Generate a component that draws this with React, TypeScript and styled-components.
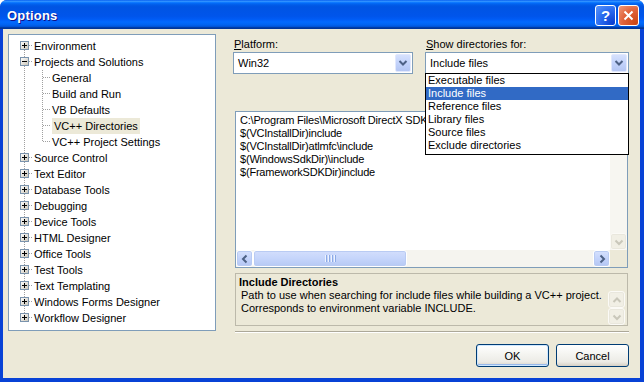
import React from 'react'
import styled, { createGlobalStyle, css } from 'styled-components'

const GlobalStyle = createGlobalStyle`
    html, body {
        margin: 0;
        padding: 0;
        background: #ffffff;
    }
    body {
        font-family: 'Liberation Sans', Arial, sans-serif;
        font-size: 11px;
        color: #000000;
    }
`

const Window = styled.div`
    width: 644px;
    height: 382px;
    display: flex;
    flex-direction: column;
    border-radius: 7px 7px 0 0;
    overflow: hidden;
    background: #0842d6;
`

const TitleBar = styled.div`
    height: 29px;
    flex: none;
    display: flex;
    align-items: center;
    padding: 0 5px 0 7px;
    background: linear-gradient(
        180deg,
        #0058ee 0%,
        #3593ff 4%,
        #288eff 6%,
        #127dff 8%,
        #036ffc 10%,
        #0262ee 14%,
        #0057e5 20%,
        #0054e3 24%,
        #0055eb 56%,
        #005bf5 66%,
        #026afe 76%,
        #0062ef 86%,
        #0052d6 92%,
        #0040ab 94%,
        #003092 100%
    );
`

const TitleText = styled.span`
    flex: 1;
    color: #ffffff;
    font-family: 'Liberation Sans', Arial, sans-serif;
    font-weight: bold;
    font-size: 13px;
    letter-spacing: 0.2px;
    padding-top: 2px;
    text-shadow: 1px 1px #0f1089;
`

const TitleButtons = styled.div`
    display: flex;
    gap: 2px;
    padding-top: 2px;
`

const CaptionButton = styled.div<{ $close?: boolean }>`
    width: 21px;
    height: 21px;
    box-sizing: border-box;
    border: 1px solid #ffffff;
    border-radius: 3px;
    display: flex;
    align-items: center;
    justify-content: center;
    color: #ffffff;
    font-family: 'Liberation Sans', Arial, sans-serif;
    font-weight: bold;
    font-size: 15px;
    background: radial-gradient(circle at 90% 90%, #0a3ed0 0%, #2a6cf0 55%, #5b95fa 100%);
    ${(p) =>
        p.$close &&
        css`
            background: radial-gradient(circle at 90% 90%, #cc4614 0%, #e0623a 55%, #f09a7a 100%);
        `}
`

const Frame = styled.div`
    flex: 1;
    display: flex;
    background: #ece9d8;
    border: solid #0842d6;
    border-width: 0 4px 4px 3px;
    padding: 5px 11px 0 5px;
`

const TreePanel = styled.div`
    width: 208px;
    height: 297px;
    box-sizing: border-box;
    border: 1px solid #7f9db9;
    background: #ffffff;
    padding: 3px 0 0 6px;
    overflow: hidden;
`

const TreeRowStyled = styled.div`
    display: flex;
    align-items: center;
    height: 16px;
`

const TreeCell = styled.span`
    width: 18px;
    height: 16px;
    flex: none;
    display: block;
`

const TreeLabel = styled.span<{ $selected?: boolean }>`
    height: 16px;
    line-height: 16px;
    padding: 0 2px 0 1px;
    white-space: nowrap;
    ${(p) =>
        p.$selected &&
        css`
            background: #ece9d8;
            padding: 0 2px;
            margin-left: 1px;
        `}
`

const RightPane = styled.div`
    margin-left: 17px;
    width: 396px;
    display: flex;
    flex-direction: column;
`

const ComboRow = styled.div`
    display: flex;
    gap: 12px;
`

const ComboGroup = styled.div<{ $width: number }>`
    width: ${(p) => p.$width}px;
    display: flex;
    flex-direction: column;
    position: relative;
`

const FieldLabel = styled.div`
    line-height: 16px;
    margin-top: 2px;
    padding-left: 1px;
`

const ComboBox = styled.div`
    height: 22px;
    box-sizing: border-box;
    border: 1px solid #7f9db9;
    background: #ffffff;
    display: flex;
    align-items: center;
    padding: 0 1px 0 4px;
`

const ComboText = styled.span`
    flex: 1;
`

const DropButton = styled.div`
    width: 16px;
    height: 18px;
    box-sizing: border-box;
    border: 1px solid #e1e8fd;
    border-radius: 2px;
    background: linear-gradient(180deg, #d6e1fd 0%, #c3d3fb 50%, #b4c6f3 100%);
    display: flex;
    align-items: center;
    justify-content: center;
`

const DropList = styled.div`
    position: absolute;
    left: 0;
    top: 39px;
    width: 204px;
    box-sizing: border-box;
    border: 1px solid #000000;
    background: #ffffff;
    padding-bottom: 2px;
    z-index: 2;
`

const DropItem = styled.div<{ $selected?: boolean }>`
    height: 13px;
    line-height: 13px;
    padding-left: 2px;
    white-space: nowrap;
    ${(p) =>
        p.$selected &&
        css`
            background: #316ac5;
            color: #ffffff;
        `}
`

const ListBox = styled.div`
    margin: 37px 0 0 2px;
    width: 393px;
    height: 157px;
    box-sizing: border-box;
    border: 1px solid #7f9db9;
    background: #ffffff;
    display: grid;
    grid-template-columns: 1fr 17px;
    grid-template-rows: 1fr 17px;
`

const ListContent = styled.div`
    padding: 2px 0 0 4px;
    overflow: hidden;
    white-space: nowrap;
`

const ListLine = styled.div`
    height: 13px;
    line-height: 13px;
    letter-spacing: -0.2px;
`

const VScroll = styled.div`
    display: flex;
    flex-direction: column;
    justify-content: space-between;
    background: #f7f6f1;
`

const HScroll = styled.div`
    display: flex;
    background: #f5f4ef;
`

const ScrollTrack = styled.div`
    flex: 1;
    display: flex;
`

const Thumb = styled.div<{ $size: number }>`
    width: ${(p) => p.$size}px;
    box-sizing: border-box;
    border: 1px solid #ffffff;
    border-radius: 3px;
    background: linear-gradient(180deg, #d3defc 0%, #c5d5fb 50%, #b6c9f4 100%);
    box-shadow: inset 0 0 0 1px #b9cbf3;
    display: flex;
    align-items: center;
    justify-content: center;
    gap: 1px;
`

const Grip = styled.span`
    width: 1px;
    height: 7px;
    background: #eef3fe;
    border-right: 1px solid #8caae6;
`

const ArrowButton = styled.div<{ $disabled?: boolean }>`
    width: 17px;
    height: 17px;
    flex: none;
    box-sizing: border-box;
    border: 1px solid #ffffff;
    border-radius: 3px;
    background: linear-gradient(180deg, #d6e1fd 0%, #c3d3fb 50%, #b4c6f3 100%);
    box-shadow: inset 0 0 0 1px #b9cbf3;
    display: flex;
    align-items: center;
    justify-content: center;
    ${(p) =>
        p.$disabled &&
        css`
            border-color: #fbfaf6;
            background: #f1efe5;
            box-shadow: inset 0 0 0 1px #e9e7dd;
        `}
`

const Corner = styled.div`
    background: #ece9d8;
`

const DescPanel = styled.div`
    margin: 5px 0 0 2px;
    width: 393px;
    height: 53px;
    box-sizing: border-box;
    border: 1px solid #bcb9aa;
    display: grid;
    grid-template-columns: 1fr 17px;
    padding-right: 2px;
`

const DescText = styled.div`
    padding: 1px 0 0 3px;
`

const DescTitle = styled.div`
    font-weight: bold;
    line-height: 14px;
`

const DescLine = styled.div`
    line-height: 13px;
    padding-left: 2px;
`

const DescScroll = styled.div`
    display: flex;
    flex-direction: column;
    justify-content: flex-end;
`

const Separator = styled.div`
    margin: 5px 0 0 2px;
    height: 0;
    border-top: 1px solid #aca899;
    border-bottom: 1px solid #ffffff;
`

const ButtonRow = styled.div`
    display: flex;
    justify-content: flex-end;
    gap: 7px;
    margin-top: 11px;
`

const PushButton = styled.div<{ $default?: boolean }>`
    width: 73px;
    height: 23px;
    box-sizing: border-box;
    border: 1px solid #003c74;
    border-radius: 3px;
    background: linear-gradient(180deg, #ffffff 0%, #f4f4f0 45%, #ecebe6 80%, #d6d0c5 100%);
    display: flex;
    align-items: center;
    justify-content: center;
    ${(p) =>
        p.$default &&
        css`
            box-shadow: inset 0 0 0 1px #cee7ff, inset 0 -1px 0 1px #98b8ea;
        `}
`

type LineKind = 'first' | 'tee' | 'elbow' | 'pipe'

const TreeLine = ({ kind, box }: { kind: LineKind; box?: 'plus' | 'minus' }) => {
    const top = kind === 'first' ? 8 : 0
    const bottom = kind === 'elbow' ? 8 : 16
    return (
        <TreeCell>
            <svg width="18" height="16" viewBox="0 0 18 16" shapeRendering="crispEdges">
                <line x1="9.5" y1={top} x2="9.5" y2={bottom} stroke="#a0a0a0" strokeDasharray="1 1" />
                {kind !== 'pipe' && (
                    <line x1="10" y1="7.5" x2="18" y2="7.5" stroke="#a0a0a0" strokeDasharray="1 1" />
                )}
                {box && (
                    <>
                        <defs>
                            <linearGradient id="bx" x1="0" y1="0" x2="1" y2="1">
                                <stop offset="0" stopColor="#ffffff" />
                                <stop offset="1" stopColor="#c9c4b6" />
                            </linearGradient>
                        </defs>
                        <rect x="5.5" y="3.5" width="8" height="8" fill="url(#bx)" stroke="#7a93ad" />
                        <line x1="7" y1="7.5" x2="12" y2="7.5" stroke="#000" />
                        {box === 'plus' && <line x1="9.5" y1="5" x2="9.5" y2="10" stroke="#000" />}
                    </>
                )}
            </svg>
        </TreeCell>
    )
}

type TreeItem = { label: string; lines: LineKind[]; box?: 'plus' | 'minus'; selected?: boolean }

const tree: TreeItem[] = [
    { label: 'Environment', lines: ['first'], box: 'plus' },
    { label: 'Projects and Solutions', lines: ['tee'], box: 'minus' },
    { label: 'General', lines: ['pipe', 'tee'] },
    { label: 'Build and Run', lines: ['pipe', 'tee'] },
    { label: 'VB Defaults', lines: ['pipe', 'tee'] },
    { label: 'VC++ Directories', lines: ['pipe', 'tee'], selected: true },
    { label: 'VC++ Project Settings', lines: ['pipe', 'elbow'] },
    { label: 'Source Control', lines: ['tee'], box: 'plus' },
    { label: 'Text Editor', lines: ['tee'], box: 'plus' },
    { label: 'Database Tools', lines: ['tee'], box: 'plus' },
    { label: 'Debugging', lines: ['tee'], box: 'plus' },
    { label: 'Device Tools', lines: ['tee'], box: 'plus' },
    { label: 'HTML Designer', lines: ['tee'], box: 'plus' },
    { label: 'Office Tools', lines: ['tee'], box: 'plus' },
    { label: 'Test Tools', lines: ['tee'], box: 'plus' },
    { label: 'Text Templating', lines: ['tee'], box: 'plus' },
    { label: 'Windows Forms Designer', lines: ['tee'], box: 'plus' },
    { label: 'Workflow Designer', lines: ['elbow'], box: 'plus' },
]

const dirTypes = [
    'Executable files',
    'Include files',
    'Reference files',
    'Library files',
    'Source files',
    'Exclude directories',
]

const includeDirs = [
    'C:\\Program Files\\Microsoft DirectX SDK',
    '$(VCInstallDir)include',
    '$(VCInstallDir)atlmfc\\include',
    '$(WindowsSdkDir)\\include',
    '$(FrameworkSDKDir)include',
]

const Chevron = ({ dir, color = '#4d6185' }: { dir: 'up' | 'down' | 'left' | 'right'; color?: string }) => {
    const paths = {
        down: 'M4.5 6.5 L8 10 L11.5 6.5',
        up: 'M4.5 10 L8 6.5 L11.5 10',
        left: 'M9.5 4.5 L6 8 L9.5 11.5',
        right: 'M6.5 4.5 L10 8 L6.5 11.5',
    }
    return (
        <svg width="15" height="15" viewBox="0 0 15 15">
            <path d={paths[dir]} fill="none" stroke={color} strokeWidth="2" />
        </svg>
    )
}

const DropChevron = () => (
    <svg width="10" height="8" viewBox="0 0 10 8">
        <path d="M1.5 2 L5 5.5 L8.5 2" fill="none" stroke="#4d6185" strokeWidth="2" />
    </svg>
)

export default function App() {
    return (
        <>
            <GlobalStyle />
            <Window>
                <TitleBar>
                    <TitleText>Options</TitleText>
                    <TitleButtons>
                        <CaptionButton>?</CaptionButton>
                        <CaptionButton $close>
                            <svg width="11" height="11" viewBox="0 0 11 11">
                                <path d="M1.5 1.5 L9.5 9.5 M9.5 1.5 L1.5 9.5" stroke="#ffffff" strokeWidth="2" />
                            </svg>
                        </CaptionButton>
                    </TitleButtons>
                </TitleBar>
                <Frame>
                    <TreePanel>
                        {tree.map((item) => (
                            <TreeRowStyled key={item.label}>
                                {item.lines.map((kind, i) => (
                                    <TreeLine
                                        key={i}
                                        kind={kind}
                                        box={i === item.lines.length - 1 ? item.box : undefined}
                                    />
                                ))}
                                <TreeLabel $selected={item.selected}>{item.label}</TreeLabel>
                            </TreeRowStyled>
                        ))}
                    </TreePanel>
                    <RightPane>
                        <ComboRow>
                            <ComboGroup $width={180}>
                                <FieldLabel>
                                    <u>P</u>latform:
                                </FieldLabel>
                                <ComboBox>
                                    <ComboText>Win32</ComboText>
                                    <DropButton>
                                        <DropChevron />
                                    </DropButton>
                                </ComboBox>
                            </ComboGroup>
                            <ComboGroup $width={204}>
                                <FieldLabel>
                                    <u>S</u>how directories for:
                                </FieldLabel>
                                <ComboBox>
                                    <ComboText>Include files</ComboText>
                                    <DropButton>
                                        <DropChevron />
                                    </DropButton>
                                </ComboBox>
                                <DropList>
                                    {dirTypes.map((t) => (
                                        <DropItem key={t} $selected={t === 'Include files'}>
                                            {t}
                                        </DropItem>
                                    ))}
                                </DropList>
                            </ComboGroup>
                        </ComboRow>
                        <ListBox>
                            <ListContent>
                                {includeDirs.map((d) => (
                                    <ListLine key={d}>{d}</ListLine>
                                ))}
                            </ListContent>
                            <VScroll>
                                <ArrowButton $disabled>
                                    <Chevron dir="up" color="#c9c7ba" />
                                </ArrowButton>
                                <ArrowButton $disabled>
                                    <Chevron dir="down" color="#c9c7ba" />
                                </ArrowButton>
                            </VScroll>
                            <HScroll>
                                <ArrowButton>
                                    <Chevron dir="left" />
                                </ArrowButton>
                                <ScrollTrack>
                                    <Thumb $size={154}>
                                        <Grip />
                                        <Grip />
                                        <Grip />
                                        <Grip />
                                    </Thumb>
                                </ScrollTrack>
                                <ArrowButton>
                                    <Chevron dir="right" />
                                </ArrowButton>
                            </HScroll>
                            <Corner />
                        </ListBox>
                        <DescPanel>
                            <DescText>
                                <DescTitle>Include Directories</DescTitle>
                                <DescLine>
                                    Path to use when searching for include files while building a VC++ project.
                                </DescLine>
                                <DescLine>Corresponds to environment variable INCLUDE.</DescLine>
                            </DescText>
                            <DescScroll>
                                <ArrowButton $disabled>
                                    <Chevron dir="up" color="#c9c7ba" />
                                </ArrowButton>
                                <ArrowButton $disabled>
                                    <Chevron dir="down" color="#c9c7ba" />
                                </ArrowButton>
                            </DescScroll>
                        </DescPanel>
                        <Separator />
                        <ButtonRow>
                            <PushButton $default>OK</PushButton>
                            <PushButton>Cancel</PushButton>
                        </ButtonRow>
                    </RightPane>
                </Frame>
            </Window>
        </>
    )
}
